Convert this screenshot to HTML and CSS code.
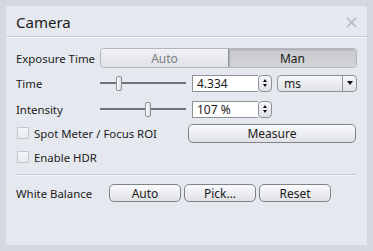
FILE: index.html
```html
<!DOCTYPE html>
<html>
  <head>
    <title>Camera</title>
    <link rel="stylesheet" href="styles.css">
  </head>
  <body>
    <div class="panel">
      <div class="header">
        <span class="title">Camera</span>
        <svg class="close" width="11" height="11" viewBox="0 0 11 11">
          <path d="M1 1 L10 10 M10 1 L1 10" stroke="#b3b6bb" stroke-width="1.6"/>
        </svg>
      </div>
      <div class="content">
        <div class="row exposure">
          <label class="name">Exposure Time</label>
          <div class="segmented">
            <div class="seg">Auto</div>
            <div class="seg on">Man</div>
          </div>
        </div>

        <div class="row slider-row">
          <label class="name">Time</label>
          <div class="slider"><div class="track"></div><div class="thumb" style="left: 16px"></div></div>
          <div class="spin">
            <div class="field">4.334</div>
            <div class="arrows"><span class="up"></span><span class="down"></span></div>
          </div>
          <div class="combo">
            <div class="combo-text">ms</div>
            <div class="combo-arrow"><span class="down"></span></div>
          </div>
        </div>

        <div class="row slider-row">
          <label class="name">Intensity</label>
          <div class="slider"><div class="track"></div><div class="thumb" style="left: 45px"></div></div>
          <div class="spin">
            <div class="field">107 %</div>
            <div class="arrows"><span class="up"></span><span class="down"></span></div>
          </div>
        </div>

        <div class="row check-row">
          <span class="box"></span><label class="check-label">Spot Meter / Focus ROI</label>
          <button class="btn measure">Measure</button>
        </div>

        <div class="row check-row">
          <span class="box"></span><label class="check-label">Enable HDR</label>
        </div>

        <div class="sep"></div>

        <div class="row wb-row">
          <label class="name wb">White Balance</label>
          <button class="btn small">Auto</button>
          <button class="btn small">Pick...</button>
          <button class="btn small">Reset</button>
        </div>
      </div>
    </div>
  </body>
</html>
```
FILE: styles.css
```css
body {
  margin: 0;
  padding: 6px;
  background: #d5d8de;
  font-family: 'Noto Sans', 'Open Sans', sans-serif;
  color: #1b1b1b;
}

.panel {
  width: 361px;
  height: 239px;
  background: #e5e8ee;
  box-sizing: border-box;
  border-radius: 2px;
}

.header {
  height: 30px;
  display: flex;
  align-items: center;
  justify-content: space-between;
  padding: 0 10px;
  border-bottom: 1px solid #c9ccd2;
  box-shadow: 0 1px 0 #f3f4f7;
}

.title {
  font-size: 15px;
  padding-top: 1px;
}

.close {
  margin-top: 2px;
  margin-right: 0;
}

.content {
  padding: 11px 10px 0 10px;
}

.row {
  display: flex;
  align-items: center;
  height: 24px;
  font-size: 11.4px;
}

.name {
  width: 84px;
  flex: none;
}

.exposure {
  height: 20px;
}

.segmented {
  display: flex;
  width: 257px;
  height: 20px;
  box-sizing: border-box;
  border: 1px solid #b4b7bc;
  border-radius: 4px;
  overflow: hidden;
}

.seg {
  flex: 1;
  display: flex;
  align-items: center;
  justify-content: center;
  color: #7b7e83;
  font-size: 12px;
  background: linear-gradient(#f1f2f5, #e0e2e7);
}

.seg.on {
  color: #1b1b1b;
  background: linear-gradient(#c8cace, #d3d5d9);
  border-left: 1px solid #8e9196;
  box-shadow: inset 1px 1px 2px #a9acb1;
}

.slider-row {
  margin-top: 3px;
}

.slider-row + .slider-row {
  margin-top: 2px;
}

.slider {
  position: relative;
  width: 86px;
  height: 16px;
  margin-right: 6px;
}

.track {
  position: absolute;
  left: 0;
  right: 0;
  top: 7px;
  height: 2px;
  background: #707378;
}

.thumb {
  position: absolute;
  top: 1px;
  width: 4px;
  height: 13px;
  border: 1px solid #8d9095;
  border-radius: 2px;
  background: linear-gradient(to right, #ffffff, #d9dbdf);
}

.spin {
  display: flex;
  width: 80px;
  height: 17px;
}

.field {
  width: 66px;
  box-sizing: border-box;
  border: 1px solid #8f9297;
  border-right: none;
  background: #fff;
  padding-left: 4px;
  line-height: 15px;
  font-size: 12px;
}

.arrows {
  width: 14px;
  box-sizing: border-box;
  border: 1px solid #8f9297;
  border-radius: 4px;
  background: linear-gradient(#f6f7f9, #dfe1e5);
  display: flex;
  flex-direction: column;
  align-items: center;
  justify-content: center;
  gap: 2px;
}

.up {
  width: 0;
  height: 0;
  border-left: 2.5px solid transparent;
  border-right: 2.5px solid transparent;
  border-bottom: 3px solid #111;
}

.down {
  width: 0;
  height: 0;
  border-left: 2.5px solid transparent;
  border-right: 2.5px solid transparent;
  border-top: 3px solid #111;
}

.combo {
  display: flex;
  width: 80px;
  height: 17px;
  margin-left: 5px;
  box-sizing: border-box;
  border: 1px solid #8f9297;
  border-radius: 4px;
  background: linear-gradient(#f6f7f9, #e0e2e6);
}

.combo-text {
  flex: 1;
  padding-left: 6px;
  line-height: 15px;
  font-size: 12px;
}

.combo-arrow {
  width: 13px;
  border-left: 1px solid #8f9297;
  display: flex;
  align-items: center;
  justify-content: center;
}

.combo-arrow .down {
  border-left-width: 3.5px;
  border-right-width: 3.5px;
  border-top-width: 4px;
}

.box {
  width: 10px;
  height: 10px;
  margin-left: 1px;
  border: 1px solid #c3c6cb;
  background: linear-gradient(#f5f6f8, #e9ebee);
  flex: none;
}

.check-label {
  margin-left: 5px;
}

.btn {
  font-family: inherit;
  font-size: 12px;
  color: #1b1b1b;
  height: 19px;
  padding: 0;
  border: 1px solid #7f8287;
  border-radius: 5px;
  background: linear-gradient(#fafbfc, #dfe1e5);
  line-height: 15px;
}

.measure {
  width: 168px;
  margin-left: auto;
  margin-right: 1px;
}

.sep {
  height: 1px;
  margin-top: 5px;
  margin-right: 1px;
  background: #c6c9cf;
  box-shadow: 0 1px 0 #f4f5f8;
}

.wb-row {
  margin-top: 6px;
}

.wb {
  width: 93px;
}

.small {
  width: 72px;
  height: 18px;
  margin-right: 3px;
}
```
